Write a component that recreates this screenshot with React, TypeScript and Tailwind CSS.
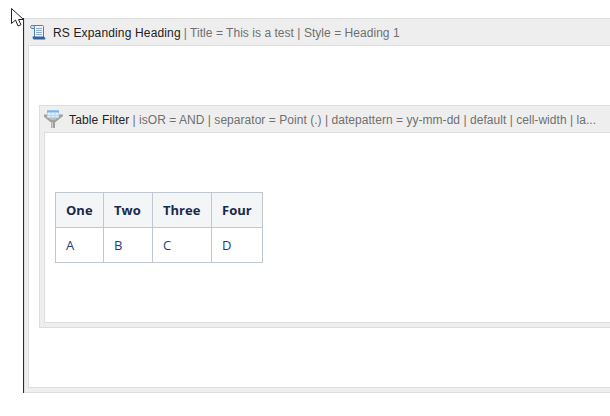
const ScrollIcon = () => (
  <svg width="16" height="15" viewBox="0 0 16 15" fill="none" className="shrink-0">
    <path d="M1.5 0.5H12.5C13.3 0.5 13.5 1 13.5 1.5V12.5H4.5V2C4.5 1 3.5 0.5 2.5 0.5Z" fill="#eef3f9" stroke="#4d7fb8" />
    <path d="M2.5 0.5C1 0.5 0.5 1.2 0.5 2C0.5 2.8 1 3.5 2 3.5H4.5" fill="#cfdff0" stroke="#4d7fb8" />
    <path d="M6 3.5h6M6 5.5h6M6 7.5h6M6 9.5h6" stroke="#8eabcc" />
    <path d="M2.5 11.5H14L15.5 13.5C15.3 14.2 15 14.5 14.5 14.5H4C3 14.5 2.5 13 2.5 11.5Z" fill="#2f639f" />
  </svg>
);

const FunnelIcon = () => (
  <svg width="20" height="20" viewBox="0 0 20 20" fill="none" className="-ml-[1px] shrink-0">
    <path d="M0 5.5H20V7L12 13.5V19H8V13.5L0 7Z" fill="#a0a0a0" />
    <path d="M8.5 13H10V19H8.5Z" fill="#c8c8c8" />
    <path d="M3 7H17L12 11H8Z" fill="#bdbdbd" />
    <rect x="4.5" y="1.5" width="11" height="7" fill="#e4effb" stroke="#b9d5f2" />
    <path d="M4 2.5h12" stroke="#74b4f2" strokeWidth="2" />
    <path d="M8 4v5M12 4v5M5 6.5h10" stroke="#b5d4f4" />
  </svg>
);

const Cursor = () => (
  <svg width="16" height="22" viewBox="0 0 16 22" fill="none" className="absolute left-[11px] top-[8px]">
    <path d="M0.5 0.5V15.5L4.5 12L7 18L10 16.7L7.5 11.5H12.5Z" fill="#fff" stroke="#222" strokeLinejoin="miter" />
  </svg>
);

const rows = [
  ["One", "Two", "Three", "Four"],
  ["A", "B", "C", "D"],
];
const colWidths = ["w-[48px]", "w-[49px]", "w-[59px]", "w-[51px]"];

const DataTable = () => (
  <table className="border-collapse font-['Open_Sans','Noto_Sans',sans-serif] text-[13px] text-[#172b4d]">
    <tbody>
      {rows.map((row, i) => (
        <tr key={i} className={i === 0 ? "h-[35px] bg-[#f4f5f7] font-bold" : "h-[35px] text-[#1c3f7c]"}>
          {row.map((cell, j) => (
            <td key={cell} className={`border border-[#c1c7d0] pl-[10px] pt-[2px] text-left ${colWidths[j]}`}>
              {cell}
            </td>
          ))}
        </tr>
      ))}
    </tbody>
  </table>
);

type MacroProps = {
  icon: React.ReactNode;
  name: string;
  params: string;
  className?: string;
  nameClassName?: string;
  children: React.ReactNode;
};

const Macro = ({ icon, name, params, className, nameClassName, children }: MacroProps) => (
  <div className={`flex flex-col border-y border-l border-[#dddddd] bg-[#eeeeee] pb-[4px] ${className ?? ""}`}>
    <div className="flex h-[26px] items-center overflow-hidden whitespace-nowrap text-[12px]">
      {icon}
      <span className={`pt-[2px] tracking-[0.15px] text-[#222222] ${nameClassName ?? ""}`}>{name}</span>
      <span className="ml-[3px] pt-[2px] tracking-[0.04px] text-[#707070]">{params}</span>
    </div>
    <div className="flex min-h-0 flex-1 flex-col border-y border-l border-[#dddddd] bg-white">{children}</div>
  </div>
);

export default function App() {
  return (
    <div className="relative h-[416px] w-[610px] overflow-hidden bg-white font-['Liberation_Sans',Arial,sans-serif]">
      <div className="flex h-[393px] w-full flex-col pl-[23px] pt-[18px]">
        <div className="flex min-h-0 flex-1 flex-col border-l border-[#1f2a44]">
          <Macro
            className="flex-1 pl-[3px]"
            nameClassName="ml-[7px]"
            icon={<span className="ml-[2px] flex"><ScrollIcon /></span>}
            name="RS Expanding Heading"
            params="| Title = This is a test | Style = Heading 1"
          >
            <div className="pl-[10px] pt-[59px]">
              <Macro
                className="h-[223px] pl-[4px]"
                nameClassName="ml-[6px]"
                icon={<FunnelIcon />}
                name="Table Filter"
                params="| isOR = AND | separator = Point (.) | datepattern = yy-mm-dd | default | cell-width | la..."
              >
                <div className="pl-[10px] pt-[59px]">
                  <DataTable />
                </div>
              </Macro>
            </div>
          </Macro>
        </div>
      </div>
      <Cursor />
    </div>
  );
}
